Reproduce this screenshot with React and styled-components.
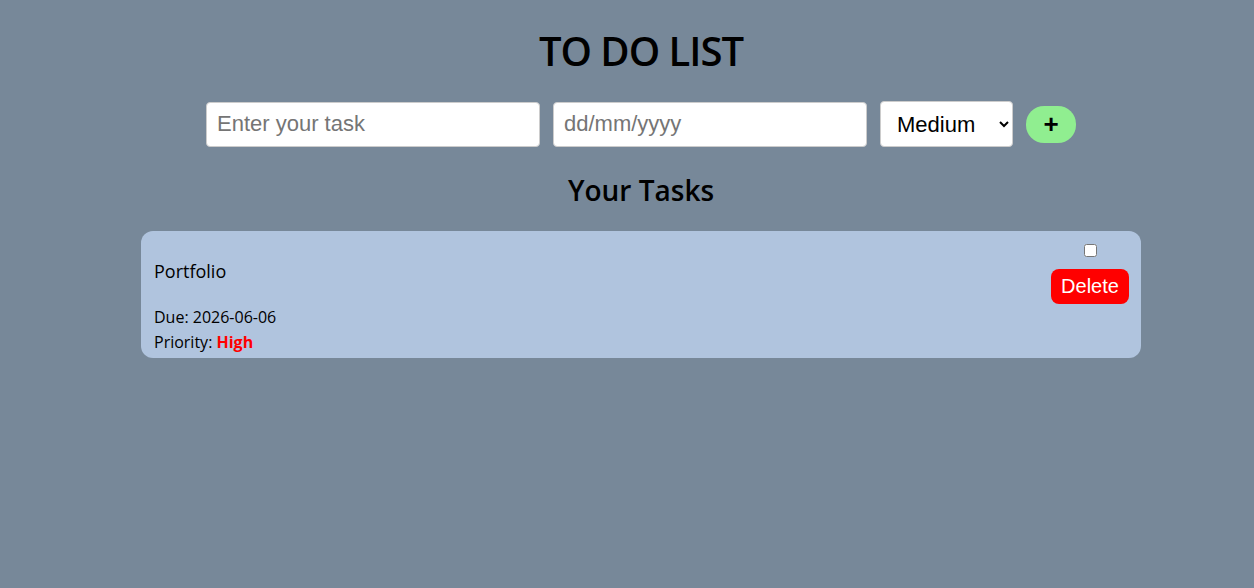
import styled, { createGlobalStyle } from "styled-components";

const Global = createGlobalStyle`
  body {
    margin: 0;
    background-color: #778899;
    font-family: "Trebuchet MS", "Open Sans", sans-serif;
  }
`;

const Page = styled.div`
  display: flex;
  flex-direction: column;
  align-items: center;
  padding: 28px 0 0 28px;
`;

const Title = styled.h1`
  margin: 0;
  font-size: 40px;
  font-weight: 600;
  line-height: 46px;
  letter-spacing: -1px;
`;

const Form = styled.div`
  display: flex;
  align-items: center;
  gap: 13px;
  margin-top: 27px;
`;

const Field = styled.input`
  box-sizing: border-box;
  width: ${(p) => p.w}px;
  height: 45px;
  padding: 0 10px;
  border: 1px solid #ccc;
  border-radius: 4px;
  font-family: "Liberation Sans", Arial, sans-serif;
  font-size: 22px;
  color: #000;
  background: #fff;
  outline: none;

  &::placeholder {
    color: #757575;
  }
`;

const Select = styled.select`
  box-sizing: border-box;
  width: 133px;
  height: 46px;
  padding: 0 6px 0 12px;
  border: 1px solid #ccc;
  border-radius: 4px;
  font-family: "Liberation Sans", Arial, sans-serif;
  font-size: 22px;
  color: #000;
  background: #fff;
`;

const AddButton = styled.button`
  width: 50px;
  height: 37px;
  border: none;
  border-radius: 18px;
  background-color: #90ee90;
  font-family: "Liberation Sans", Arial, sans-serif;
  font-size: 26px;
  font-weight: 700;
  line-height: 1;
  color: #000;
  cursor: pointer;
`;

const Subtitle = styled.h2`
  margin: 27px 0 0;
  font-size: 28px;
  font-weight: 600;
  line-height: 32px;
`;

const Card = styled.div`
  box-sizing: border-box;
  display: flex;
  justify-content: space-between;
  width: 1000px;
  margin-top: 25px;
  padding: 12px 12px 6px 13px;
  border-radius: 12px;
  background-color: #b0c4de;
`;

const Info = styled.div`
  display: flex;
  flex-direction: column;
`;

const Name = styled.span`
  margin-top: 17px;
  font-size: 18px;
  line-height: 22px;
`;

const Meta = styled.span`
  margin-top: ${(p) => p.gap}px;
  font-size: 16px;
  line-height: 20px;
`;

const Priority = styled.span`
  color: ${(p) => p.color};
  font-weight: 700;
`;

const Actions = styled.div`
  display: flex;
  flex-direction: column;
  align-items: center;
  gap: 12px;
`;

const Check = styled.input`
  width: 13px;
  height: 13px;
  margin: 1px 0 0;
`;

const DeleteButton = styled.button`
  width: 78px;
  height: 35px;
  border: none;
  border-radius: 8px;
  background-color: #ff0000;
  color: #fff;
  font-family: "Liberation Sans", Arial, sans-serif;
  font-size: 20px;
  cursor: pointer;
`;

const priorityColors = { High: "#ff0000", Medium: "#ffa500", Low: "#008000" };

const tasks = [{ name: "Portfolio", due: "2026-06-06", priority: "High" }];

export default function App() {
  return (
    <>
      <Global />
      <Page>
        <Title>TO DO LIST</Title>
        <Form>
          <Field w={334} placeholder="Enter your task" />
          <Field w={314} placeholder="dd/mm/yyyy" />
          <Select defaultValue="Medium">
            <option>Low</option>
            <option>Medium</option>
            <option>High</option>
          </Select>
          <AddButton>+</AddButton>
        </Form>
        <Subtitle>Your Tasks</Subtitle>
        {tasks.map((t) => (
          <Card key={t.name}>
            <Info>
              <Name>{t.name}</Name>
              <Meta gap={25}>Due: {t.due}</Meta>
              <Meta gap={5}>
                Priority: <Priority color={priorityColors[t.priority]}>{t.priority}</Priority>
              </Meta>
            </Info>
            <Actions>
              <Check type="checkbox" />
              <DeleteButton>Delete</DeleteButton>
            </Actions>
          </Card>
        ))}
      </Page>
    </>
  );
}
